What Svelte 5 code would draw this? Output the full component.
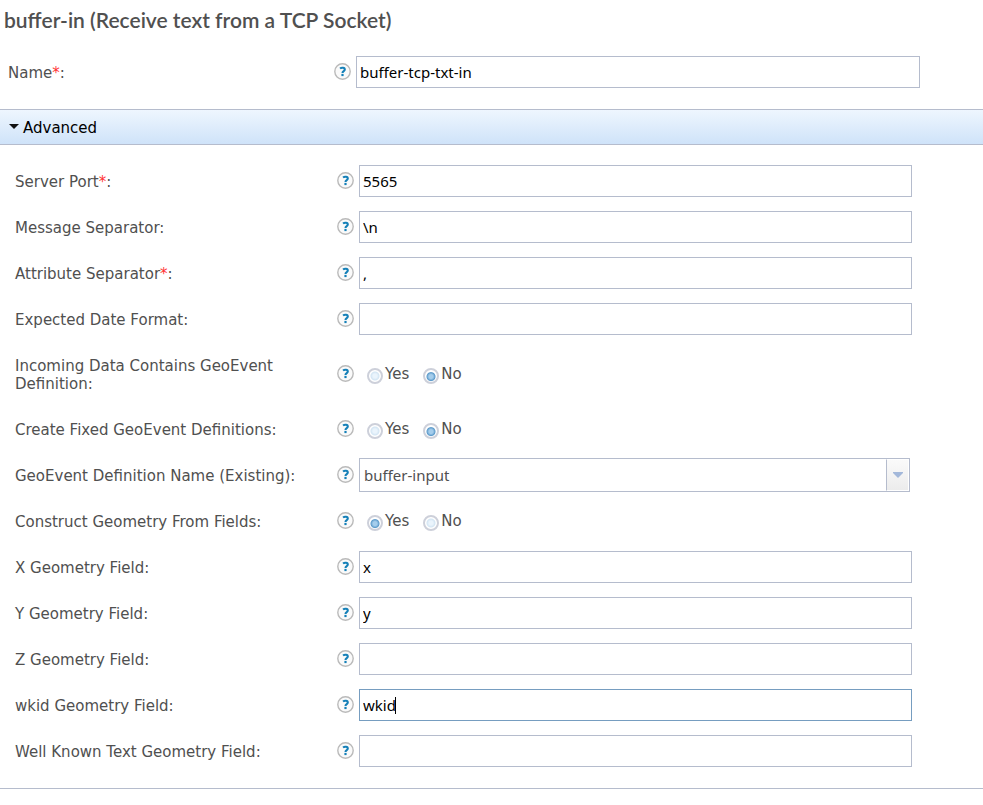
<script>
  let name = $state('buffer-tcp-txt-in');

  let fields = $state([
    { id: 'port', label: 'Server Port', required: true, type: 'text', value: '5565' },
    { id: 'message-separator', label: 'Message Separator', type: 'text', value: '\\n' },
    { id: 'attribute-separator', label: 'Attribute Separator', required: true, type: 'text', value: ',' },
    { id: 'date-format', label: 'Expected Date Format', type: 'text', value: '' },
    { id: 'contains-definition', label: 'Incoming Data Contains GeoEvent Definition', type: 'radio', value: 'No' },
    { id: 'create-fixed', label: 'Create Fixed GeoEvent Definitions', type: 'radio', value: 'No' },
    { id: 'definition-name', label: 'GeoEvent Definition Name (Existing)', type: 'select', value: 'buffer-input' },
    { id: 'construct-geometry', label: 'Construct Geometry From Fields', type: 'radio', value: 'Yes' },
    { id: 'x-field', label: 'X Geometry Field', type: 'text', value: 'x' },
    { id: 'y-field', label: 'Y Geometry Field', type: 'text', value: 'y' },
    { id: 'z-field', label: 'Z Geometry Field', type: 'text', value: '' },
    { id: 'wkid-field', label: 'wkid Geometry Field', type: 'text', value: 'wkid', active: true },
    { id: 'wkt-field', label: 'Well Known Text Geometry Field', type: 'text', value: '' }
  ]);
</script>

{#snippet help()}
  <button class="help" type="button" aria-label="Help">
    <svg width="17" height="17" viewBox="0 0 17 17" aria-hidden="true">
      <circle cx="8.5" cy="8.5" r="7.7" fill="#fafafa" stroke="#bababa" stroke-width="1.4" />
      <path d="M6 5.5C7.5 4.4 10.8 4.4 10.8 6.5C10.8 8.1 8.5 8 8.5 9.9" fill="none" stroke="#1580b8" stroke-width="2.1" />
      <rect x="7.4" y="10.9" width="2.2" height="2.2" fill="#1580b8" />
    </svg>
  </button>
{/snippet}

{#snippet caption(text, required)}
  {text}{#if required}<span class="star">*</span>{/if}:
{/snippet}

<form class="page">
  <h1>buffer-in (Receive text from a TCP Socket)</h1>

  <div class="row name-row">
    <label class="caption" for="name">{@render caption('Name', true)}</label>
    {@render help()}
    <input class="text" id="name" type="text" bind:value={name} />
  </div>

  <details open>
    <summary>
      <svg width="10" height="6" viewBox="0 0 10 6" aria-hidden="true"><path d="M0 0H10L5 5Z" fill="#111" /></svg>
      <span>Advanced</span>
    </summary>
    <div class="fields">
      {#each fields as field (field.id)}
        <div class="row" role={field.type === 'radio' ? 'radiogroup' : undefined} aria-labelledby={field.type === 'radio' ? `${field.id}-caption` : undefined}>
          {#if field.type === 'radio'}
            <span class="caption" id={`${field.id}-caption`}>{@render caption(field.label, field.required)}</span>
          {:else}
            <label class="caption" for={field.id}>{@render caption(field.label, field.required)}</label>
          {/if}
          {@render help()}
          {#if field.type === 'radio'}
            <div class="choices">
              {#each ['Yes', 'No'] as option}
                <label class="choice">
                  <input type="radio" name={field.id} value={option} bind:group={field.value} />
                  <span>{option}</span>
                </label>
              {/each}
            </div>
          {:else if field.type === 'select'}
            <div class="select">
              <select id={field.id} bind:value={field.value}>
                <option>buffer-input</option>
              </select>
              <span class="arrow">
                <svg width="10" height="6" viewBox="0 0 10 6" aria-hidden="true"><path d="M0 0H10V1L5 6L0 1Z" fill="#a3b8da" /></svg>
              </span>
            </div>
          {:else}
            <input class="text" class:active={field.active} id={field.id} type="text" bind:value={field.value} />
          {/if}
        </div>
      {/each}
    </div>
  </details>
</form>

<style>
  :global(body) {
    margin: 0;
    background: #fff;
  }

  .page {
    font: 15px/18px 'DejaVu Sans', Verdana, sans-serif;
    color: #505050;
  }

  h1 {
    margin: 0;
    padding: 8px 4px 24px;
    font: 600 21px/24px Lato, sans-serif;
  }

  .row {
    display: grid;
    grid-template-columns: 322px 17px 1fr;
    align-items: center;
    min-height: 32px;
  }

  .name-row {
    padding: 0 63px 21px 8px;
    grid-template-columns: 326px 17px 1fr;
  }

  .caption {
    padding: 8px 24px 6px 0;
  }

  .star {
    color: #f33;
  }

  .help {
    width: 17px;
    height: 18px;
    padding: 0 0 1px;
    border: 0;
    background: none;
  }

  .help svg {
    display: block;
  }

  .text {
    box-sizing: border-box;
    height: 32px;
    min-width: 0;
    margin: 0 0 0 5px;
    padding: 0 3px 1px;
    border: 1px solid #b5bccd;
    border-radius: 0;
    outline: none;
    background: #fff;
    color: #000;
    font: 15px 'Noto Sans', sans-serif;
  }

  .text.active {
    border-color: #769dc0;
    background: linear-gradient(#000, #000) 35px 7px / 1px 17px no-repeat;
  }

  summary {
    display: flex;
    align-items: center;
    gap: 4px;
    height: 34px;
    padding: 0 9px;
    border: solid #b5bccd;
    border-width: 1px 0;
    background: linear-gradient(#eef6fe, #cfe3f9);
    color: #000;
    cursor: pointer;
    list-style: none;
  }

  summary span {
    padding-top: 2px;
  }

  .fields {
    display: flex;
    flex-direction: column;
    gap: 14px;
    padding: 20px 71px 21px 15px;
    border-bottom: 1px solid #b5bccd;
  }

  .choices {
    display: flex;
    gap: 14px;
    padding-left: 13px;
  }

  .choice {
    display: flex;
    gap: 2px;
  }

  input[type='radio'] {
    appearance: none;
    width: 16px;
    height: 16px;
    margin: 3px 0 0;
    border: 2px solid #cdd0da;
    border-radius: 50%;
    background: radial-gradient(circle, #eaf4fc 0 2px, #d3e5f3 4px, #fff 5px);
  }

  input[type='radio']:checked {
    background: radial-gradient(circle at 50% 55%, #a4cdec 0 2px, #5f9ccb 4px, #fff 5px);
  }

  .select {
    box-sizing: border-box;
    display: flex;
    position: relative;
    height: 34px;
    margin: -1px 2px -1px 5px;
    border: 1px solid #b5bccd;
  }

  select {
    appearance: none;
    flex: 1;
    min-width: 0;
    padding: 0 28px 1px 4px;
    border: 0;
    background: #fff;
    color: #505050;
    font: 15px 'Noto Sans', sans-serif;
  }

  .arrow {
    box-sizing: border-box;
    position: absolute;
    top: 0;
    right: 0;
    bottom: 0;
    width: 23px;
    display: flex;
    align-items: center;
    justify-content: center;
    border: 1px solid #fff;
    border-left-color: #b5bccd;
    background: linear-gradient(#fafafa, #ececec);
    pointer-events: none;
  }
</style>
